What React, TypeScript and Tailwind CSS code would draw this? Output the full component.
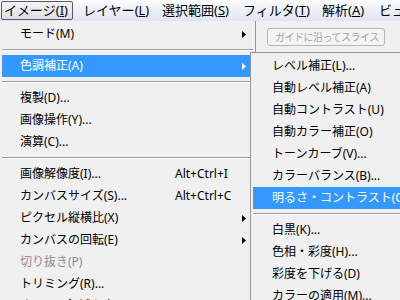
import React from "react";

const FONT = { fontFamily: '"Noto Sans", "Noto Sans CJK JP", sans-serif' };

function Arrow({ white }: { white?: boolean }) {
  return (
    <svg width="4" height="7" viewBox="0 0 4 7" className="shrink-0">
      <path d="M0 0 L4 3.5 L0 7 Z" fill={white ? "#ffffff" : "#000000"} />
    </svg>
  );
}

function Sep() {
  return (
    <div className="h-[10px] pt-[4px]">
      <div className="h-[1px] bg-[#a0a0a0]" />
      <div className="h-[1px] bg-[#ffffff]" />
    </div>
  );
}

type Item = {
  label: string;
  shortcut?: string;
  arrow?: boolean;
  active?: boolean;
  disabled?: boolean;
};

function MainRow({ it }: { it: Item }) {
  const color = it.active ? "text-white" : it.disabled ? "text-[#8e8e8e]" : "text-black";
  return (
    <div
      className={`h-[22px] flex items-center pl-[18px] pr-[7px] ${it.active ? "bg-[#3399ff]" : ""} ${color}`}
    >
      <span className="w-[155px] shrink-0 whitespace-nowrap">{it.label}</span>
      <span className="flex-1 whitespace-nowrap">{it.shortcut ?? ""}</span>
      {it.arrow ? <Arrow white={it.active} /> : null}
    </div>
  );
}

function SubRow({ it }: { it: Item }) {
  return (
    <div
      className={`h-[22px] flex items-center pl-[19px] whitespace-nowrap ${it.active ? "bg-[#3399ff] text-white" : "text-black"}`}
    >
      {it.label}
    </div>
  );
}

function BarItem({ text, key1, w, first }: { text: string; key1: string; w: string; first?: boolean }) {
  if (first) {
    return (
      <div className={`${w} h-[21px] pt-[1px] pl-[1px] shrink-0`}>
        <div className="w-[72px] h-[19px] border border-[#5a5a5a] rounded-[2px] bg-gradient-to-b from-[#f4f4f6] to-[#dcdfe6] flex items-center pl-[2px] whitespace-nowrap">
          {text}(<span className="underline">{key1}</span>)
        </div>
      </div>
    );
  }
  return (
    <div className={`${w} h-[21px] pl-[8px] flex items-center shrink-0 whitespace-nowrap`}>
      {text}(<span className="underline">{key1}</span>)
    </div>
  );
}

export default function App() {
  return (
    <div className="w-[400px] h-[300px] overflow-hidden bg-[#f0f0f0] text-[12px] leading-none" style={FONT}>
      {/* menu bar */}
      <div className="h-[21px] flex bg-gradient-to-b from-[#fbfcfe] to-[#dfe5f1] text-[13px] text-black overflow-hidden">
        <BarItem first text="イメージ" key1="I" w="w-[75px]" />
        <BarItem text="レイヤー" key1="L" w="w-[79px]" />
        <BarItem text="選択範囲" key1="S" w="w-[81px]" />
        <BarItem text="フィルタ" key1="T" w="w-[79px]" />
        <BarItem text="解析" key1="A" w="w-[57px]" />
        <div className="h-[21px] pl-[8px] flex items-center whitespace-nowrap">ビュー</div>
      </div>

      <div className="flex">
        {/* main menu */}
        <div className="w-[256px] h-[279px] shrink-0 border-r border-[#979797] pt-[2px] px-[2px]">
          <MainRow it={{ label: "モード(M)", arrow: true }} />
          <Sep />
          <MainRow it={{ label: "色調補正(A)", arrow: true, active: true }} />
          <Sep />
          <MainRow it={{ label: "複製(D)..." }} />
          <MainRow it={{ label: "画像操作(Y)..." }} />
          <MainRow it={{ label: "演算(C)..." }} />
          <Sep />
          <MainRow it={{ label: "画像解像度(I)...", shortcut: "Alt+Ctrl+I" }} />
          <MainRow it={{ label: "カンバスサイズ(S)...", shortcut: "Alt+Ctrl+C" }} />
          <MainRow it={{ label: "ピクセル縦横比(X)", arrow: true }} />
          <MainRow it={{ label: "カンバスの回転(E)", arrow: true }} />
          <MainRow it={{ label: "切り抜き(P)", disabled: true }} />
          <MainRow it={{ label: "トリミング(R)..." }} />
          <MainRow it={{ label: "すべての領域を表示(V)" }} />
        </div>

        {/* right column */}
        <div className="flex-1 flex flex-col min-w-0">
          <div className="h-[31px] pl-[11px] pt-[7px]">
            <div className="w-[118px] h-[18px] border border-[#b5b5b5] rounded-[3px] bg-[#f4f4f4] text-[#a3a3a3] text-[10px] tracking-[-0.5px] flex items-center pl-[7px] whitespace-nowrap">
              ガイドに沿ってスライス
            </div>
          </div>
          <div className="-ml-[6px] relative z-10 w-[160px] h-[260px] bg-[#f0f0f0] border-l border-t border-[#979797] pt-[2px] pl-[2px]">
            <SubRow it={{ label: "レベル補正(L)..." }} />
            <SubRow it={{ label: "自動レベル補正(A)" }} />
            <SubRow it={{ label: "自動コントラスト(U)" }} />
            <SubRow it={{ label: "自動カラー補正(O)" }} />
            <SubRow it={{ label: "トーンカーブ(V)..." }} />
            <SubRow it={{ label: "カラーバランス(B)..." }} />
            <SubRow it={{ label: "明るさ・コントラスト(C)...", active: true }} />
            <Sep />
            <SubRow it={{ label: "白黒(K)..." }} />
            <SubRow it={{ label: "色相・彩度(H)..." }} />
            <SubRow it={{ label: "彩度を下げる(D)" }} />
            <SubRow it={{ label: "カラーの適用(M)..." }} />
          </div>
        </div>
      </div>
    </div>
  );
}
